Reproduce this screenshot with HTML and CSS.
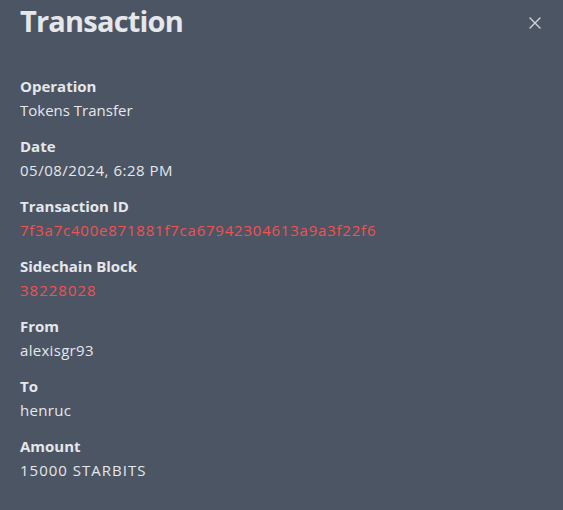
FILE: index.html
```html
<!DOCTYPE html>
<html>
<head>
<meta charset="utf-8">
<link rel="stylesheet" href="styles.css">
</head>
<body>
<div class="modal">
  <div class="header">
    <h1 class="title">Transaction</h1>
    <button class="close" aria-label="Close">
      <svg width="12" height="12" viewBox="0 0 12 12"><path d="M1 1L11 11M11 1L1 11" stroke="#d1d5db" stroke-width="1.4" stroke-linecap="round"/></svg>
    </button>
  </div>
  <dl class="fields">
    <div class="field"><dt>Operation</dt><dd>Tokens Transfer</dd></div>
    <div class="field"><dt>Date</dt><dd class="date">05/08/2024, 6:28 PM</dd></div>
    <div class="field"><dt>Transaction ID</dt><dd class="link hash">7f3a7c400e871881f7ca67942304613a9a3f22f6</dd></div>
    <div class="field"><dt>Sidechain Block</dt><dd class="link num">38228028</dd></div>
    <div class="field"><dt>From</dt><dd class="user">alexisgr93</dd></div>
    <div class="field"><dt>To</dt><dd class="user">henruc</dd></div>
    <div class="field"><dt>Amount</dt><dd class="num">15000 STARBITS</dd></div>
  </dl>
</div>
</body>
</html>
```
FILE: styles.css
```css
html, body {
  margin: 0;
  padding: 0;
  background: #4b5563;
}
body {
  font-family: "Open Sans", "Noto Sans", sans-serif;
  color: #e5e7eb;
  width: 563px;
  height: 510px;
  overflow: hidden;
}
.modal {
  padding: 0 20px;
}
.header {
  display: flex;
  justify-content: space-between;
  align-items: flex-start;
  height: 60px;
}
.title {
  margin: 0;
  padding-top: 2px;
  font-size: 29px;
  font-weight: 700;
  letter-spacing: -0.8px;
  line-height: 38px;
  color: #e5e7eb;
}
.close {
  background: none;
  border: 0;
  padding: 0;
  margin: 17px 2px 0 0;
  width: 12px;
  height: 12px;
  display: flex;
}
.fields {
  margin: 14px 0 0;
  display: flex;
  flex-direction: column;
  gap: 12px;
}
.field dt {
  font-weight: 700;
  font-size: 15px;
  line-height: 24px;
}
.field dd {
  margin: 0;
  font-size: 15px;
  line-height: 24px;
}
.field dd.link {
  color: #f05252;
}
.field dd.date {
  letter-spacing: 0.5px;
}
.field dd.hash {
  letter-spacing: 0.78px;
}
.field dd.num {
  letter-spacing: 1px;
}
.field dd.user {
  letter-spacing: 0.3px;
}
```
